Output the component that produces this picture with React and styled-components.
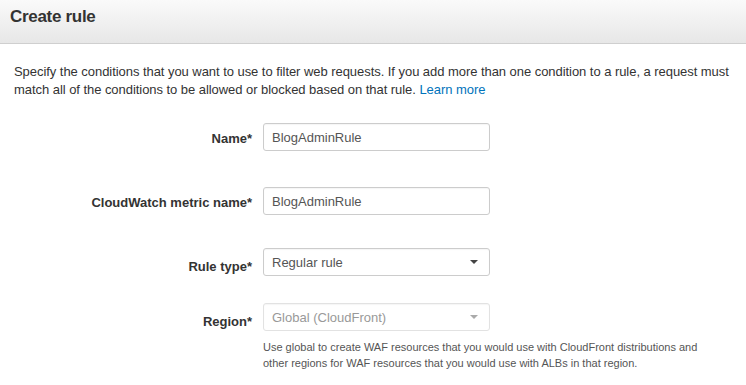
import styled, { createGlobalStyle } from "styled-components";

const GlobalStyle = createGlobalStyle`
  body {
    margin: 0;
    background: #fff;
    font-family: "Liberation Sans", Arial, sans-serif;
    color: #333;
  }
`;

const Page = styled.div`
  width: 746px;
  height: 385px;
  overflow: hidden;
`;

const Header = styled.div`
  height: 44px;
  display: flex;
  align-items: center;
  padding: 0 10px 9px;
  box-sizing: border-box;
  background: linear-gradient(#fafafa, #e7e7e7);
  border-bottom: 1px solid #cfcfcf;
`;

const Title = styled.h1`
  margin: 0;
  font-size: 17px;
  font-weight: bold;
  color: #333;
  letter-spacing: -0.3px;
`;

const Body = styled.div`
  padding: 19px 14px 0;
`;

const Intro = styled.p`
  margin: 0;
  font-size: 13px;
  line-height: 18px;
  color: #333;
  white-space: nowrap;
  letter-spacing: -0.05px;
`;

const Link = styled.a`
  color: #0073bb;
  text-decoration: none;
`;

const Form = styled.div`
  display: flex;
  flex-direction: column;
`;

const Row = styled.div`
  display: flex;
  align-items: flex-start;
  gap: 11px;
  margin-top: ${(p) => p.$top}px;
`;

const Label = styled.label`
  width: 238px;
  text-align: right;
  font-size: 13px;
  line-height: 28px;
  font-weight: bold;
  color: #333;
  padding-top: ${(p) => p.$shift || 0}px;
  margin-bottom: -${(p) => p.$shift || 0}px;
`;

const Field = styled.div`
  width: 227px;
`;

const Box = styled.div`
  height: 28px;
  box-sizing: border-box;
  display: flex;
  align-items: center;
  justify-content: space-between;
  padding: 0 11px 0 8px;
  border: 1px solid ${(p) => (p.$disabled ? "#e2e2e2" : "#cccccc")};
  border-radius: 3px;
  background: #fff;
  font-size: 13px;
  color: ${(p) => (p.$disabled ? "#999" : "#555")};
  box-shadow: inset 0 1px 1px rgba(0, 0, 0, 0.04);
`;

const Caret = styled.span`
  width: 0;
  height: 0;
  border-left: 4px solid transparent;
  border-right: 4px solid transparent;
  border-top: 4px solid ${(p) => (p.$disabled ? "#aaa" : "#444")};
`;

const Help = styled.div`
  margin-top: 8px;
  font-size: 11px;
  line-height: 16px;
  color: #555;
  white-space: nowrap;
`;

const rows = [
  { label: "Name*", value: "BlogAdminRule", top: 24, shift: 2 },
  { label: "CloudWatch metric name*", value: "BlogAdminRule", top: 36, shift: 2 },
];

const App = () => {
  return (
    <Page>
      <GlobalStyle />
      <Header>
        <Title>Create rule</Title>
      </Header>
      <Body>
        <Intro>
          Specify the conditions that you want to use to filter web requests. If you add more than one condition to a rule, a request must
          <br />
          match all of the conditions to be allowed or blocked based on that rule. <Link href="#">Learn more</Link>
        </Intro>
        <Form>
          {rows.map((r) => (
            <Row key={r.label} $top={r.top}>
              <Label $shift={r.shift}>{r.label}</Label>
              <Field>
                <Box>{r.value}</Box>
              </Field>
            </Row>
          ))}
          <Row $top={33}>
            <Label $shift={5}>Rule type*</Label>
            <Field>
              <Box>
                Regular rule
                <Caret />
              </Box>
            </Field>
          </Row>
          <Row $top={27}>
            <Label $shift={5}>Region*</Label>
            <Field>
              <Box $disabled>
                Global (CloudFront)
                <Caret $disabled />
              </Box>
              <Help>
                Use global to create WAF resources that you would use with CloudFront distributions and
                <br />
                other regions for WAF resources that you would use with ALBs in that region.
              </Help>
            </Field>
          </Row>
        </Form>
      </Body>
    </Page>
  );
};

export default App;
